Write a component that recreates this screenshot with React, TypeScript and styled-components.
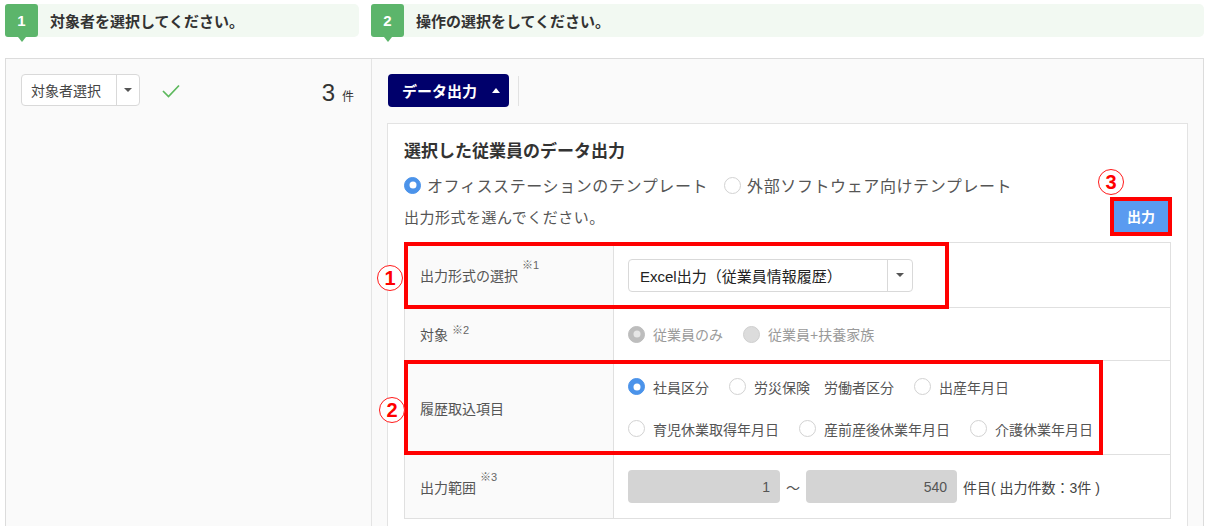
import styled, { createGlobalStyle } from "styled-components";

const GlobalStyle = createGlobalStyle`
  html, body {
    margin: 0;
    padding: 0;
    overflow: hidden;
    background: #ffffff;
  }
  body {
    font-family: "Liberation Sans", "Noto Sans CJK JP", sans-serif;
    color: #333333;
  }
  * {
    box-sizing: border-box;
  }
`;

const historyRows = [
  [
    { label: "社員区分", checked: true },
    { label: "労災保険　労働者区分" },
    { label: "出産年月日" },
  ],
  [
    { label: "育児休業取得年月日" },
    { label: "産前産後休業年月日" },
    { label: "介護休業年月日" },
  ],
];

export default function App() {
  return (
    <>
      <GlobalStyle />
      <Page>
        <StepRow>
          <Step $gap>
            <Badge>1</Badge>
            <StepText>対象者を選択してください。</StepText>
          </Step>
          <Step>
            <Badge>2</Badge>
            <StepText>操作の選択をしてください。</StepText>
          </Step>
        </StepRow>

        <Panel>
          <LeftCol>
            <SelectBox $width={119}>
              <SelectText $width={97}>対象者選択</SelectText>
              <SelectCaret $width={22}>
                <CaretDown />
              </SelectCaret>
            </SelectBox>
            <CheckIcon width="18" height="14" viewBox="0 0 18 14">
              <polyline
                points="1,7 6.5,12.5 17,1.5"
                fill="none"
                stroke="#5cb85c"
                strokeWidth="1.7"
              />
            </CheckIcon>
            <Count>
              3<small>件</small>
            </Count>
          </LeftCol>

          <RightCol>
            <Toolbar>
              <NavyButton>
                データ出力
                <CaretUp />
              </NavyButton>
              <ToolSep />
            </Toolbar>

            <Card>
              <CardTitle>選択した従業員のデータ出力</CardTitle>
              <TemplateRow>
                <RadioItem $gap={6} $size={16} $spacing={0.6}>
                  <RadioDot $on />
                  オフィスステーションのテンプレート
                </RadioItem>
                <RadioItem $gap={6} $size={16} $spacing={0.6}>
                  <RadioDot />
                  外部ソフトウェア向けテンプレート
                </RadioItem>
              </TemplateRow>

              <DescRow>
                <Desc>出力形式を選んでください。</Desc>
                <OutputWrap>
                  <Marker $left={-16} $top={-32}>3</Marker>
                  <OutputButton>出力</OutputButton>
                </OutputWrap>
              </DescRow>

              <FormTable>
                <Row $height={64}>
                  <Highlight $width={545} $height={67}>
                    <Marker $left={-31} $top={19}>1</Marker>
                  </Highlight>
                  <LabelCell>
                    出力形式の選択<Note>※1</Note>
                  </LabelCell>
                  <ValueCell>
                    <SelectBox $width={285} $height={33}>
                      <SelectText $width={260} $size={15} $color="#222">
                        Excel出力（従業員情報履歴）
                      </SelectText>
                      <SelectCaret $width={24}>
                        <CaretDown />
                      </SelectCaret>
                    </SelectBox>
                  </ValueCell>
                </Row>

                <Row $height={52}>
                  <LabelCell>
                    対象<Note>※2</Note>
                  </LabelCell>
                  <ValueCell>
                    <RadioItem $gap={8} $size={14} $muted>
                      <RadioDot $on $off />
                      従業員のみ
                    </RadioItem>
                    <RadioItem $gap={8} $size={14} $muted>
                      <RadioDot $off />
                      従業員+扶養家族
                    </RadioItem>
                  </ValueCell>
                </Row>

                <Row $height={93}>
                  <Highlight $width={699} $height={95}>
                    <Marker $left={-29} $top={33}>2</Marker>
                  </Highlight>
                  <LabelCell>履歴取込項目</LabelCell>
                  <ValueCell>
                    <RadioLines>
                      {historyRows.map((line, i) => (
                        <RadioLine key={i}>
                          {line.map((item) => (
                            <RadioItem key={item.label} $gap={8} $size={14}>
                              <RadioDot $on={item.checked} />
                              {item.label}
                            </RadioItem>
                          ))}
                        </RadioLine>
                      ))}
                    </RadioLines>
                  </ValueCell>
                </Row>

                <Row $height={63} $last>
                  <LabelCell>
                    出力範囲<Note>※3</Note>
                  </LabelCell>
                  <ValueCell>
                    <RangeInput $width={152}>1</RangeInput>
                    <Tilde>〜</Tilde>
                    <RangeInput $width={151}>540</RangeInput>
                    <RangeNote>件目( 出力件数：3件 )</RangeNote>
                  </ValueCell>
                </Row>
              </FormTable>
            </Card>
          </RightCol>
        </Panel>
      </Page>
    </>
  );
}

const Page = styled.div`
  min-height: 100vh;
  padding: 4px 6px 0 5px;
  display: flex;
  flex-direction: column;
`;

const StepRow = styled.div`
  display: grid;
  grid-template-columns: 366px 1fr;
`;

const Step = styled.div<{ $gap?: boolean }>`
  display: flex;
  align-items: center;
  height: 33px;
  margin-right: ${(p) => (p.$gap ? "12px" : "0")};
  background: #f2f9f2;
  border-radius: 3px 5px 5px 3px;
`;

const Badge = styled.div`
  position: relative;
  width: 33px;
  height: 33px;
  flex: none;
  display: flex;
  align-items: center;
  justify-content: center;
  background: #5cb56b;
  border-radius: 3px;
  color: #ffffff;
  font-weight: 700;
  font-size: 15px;

  &::after {
    content: "";
    position: absolute;
    left: 50%;
    bottom: -5px;
    transform: translateX(-50%);
    border-left: 4px solid transparent;
    border-right: 4px solid transparent;
    border-top: 5px solid #5cb56b;
  }
`;

const StepText = styled.span`
  margin-left: 12px;
  font-size: 15px;
  font-weight: 700;
  color: #333333;
`;

const Panel = styled.div`
  flex: 1;
  margin-top: 21px;
  display: grid;
  grid-template-columns: 366px 1fr;
  border: 1px solid #dcdcdc;
  border-bottom: none;
`;

const LeftCol = styled.div`
  display: flex;
  align-items: flex-start;
  padding: 15px 17px 0 15px;
  background: #fafafa;
  border-right: 1px solid #e4e4e4;
`;

const SelectBox = styled.div<{ $width: number; $height?: number }>`
  display: flex;
  width: ${(p) => p.$width}px;
  height: ${(p) => p.$height ?? 32}px;
  flex: none;
  background: #ffffff;
  border: 1px solid #d9d9d9;
  border-radius: 4px;
`;

const SelectText = styled.div<{ $width: number; $size?: number; $color?: string }>`
  width: ${(p) => p.$width}px;
  display: flex;
  align-items: center;
  padding-left: ${(p) => (p.$size ? 11 : 9)}px;
  border-right: 1px solid #d9d9d9;
  font-size: ${(p) => p.$size ?? 14}px;
  color: ${(p) => p.$color ?? "#444"};
  white-space: nowrap;
`;

const SelectCaret = styled.div<{ $width: number }>`
  width: ${(p) => p.$width}px;
  display: flex;
  align-items: center;
  justify-content: center;
`;

const CaretDown = styled.span`
  border-left: 4px solid transparent;
  border-right: 4px solid transparent;
  border-top: 4px solid #555555;
`;

const CaretUp = styled.span`
  margin-left: 15px;
  border-left: 4px solid transparent;
  border-right: 4px solid transparent;
  border-bottom: 5px solid #ffffff;
`;

const CheckIcon = styled.svg`
  margin: 10px 0 0 22px;
  flex: none;
`;

const Count = styled.div`
  margin-left: auto;
  margin-top: 3px;
  font-size: 24px;
  line-height: 32px;
  color: #333333;

  small {
    margin-left: 7px;
    font-size: 12px;
  }
`;

const RightCol = styled.div`
  padding: 15px 15px 0 15px;
  background: #fafafa;
`;

const Toolbar = styled.div`
  display: flex;
  align-items: center;
  height: 33px;
`;

const NavyButton = styled.button`
  display: flex;
  align-items: center;
  height: 33px;
  width: 121px;
  padding: 0 0 0 14px;
  margin-left: 1px;
  border: none;
  border-radius: 4px;
  background: #00006b;
  color: #ffffff;
  font-family: inherit;
  font-size: 15px;
  font-weight: 700;
`;

const ToolSep = styled.span`
  width: 1px;
  height: 30px;
  margin-left: 9px;
  background: #e2e2e2;
`;

const Card = styled.div`
  margin-top: 16px;
  padding: 15px 16px 16px 16px;
  background: #ffffff;
  border: 1px solid #e3e3e3;
`;

const CardTitle = styled.h2`
  margin: 0;
  font-size: 17px;
  line-height: 26px;
  font-weight: 700;
  color: #333333;
`;

const TemplateRow = styled.div`
  display: flex;
  align-items: center;
  gap: 16px;
  height: 28px;
  margin-top: 6px;
`;

const RadioItem = styled.label<{
  $gap: number;
  $size: number;
  $muted?: boolean;
  $spacing?: number;
}>`
  display: flex;
  align-items: center;
  gap: ${(p) => p.$gap}px;
  font-size: ${(p) => p.$size}px;
  letter-spacing: ${(p) => p.$spacing ?? 0}px;
  color: ${(p) => (p.$muted ? "#9a9a9a" : "#555555")};
  white-space: nowrap;
`;

const RadioDot = styled.span<{ $on?: boolean; $off?: boolean }>`
  position: relative;
  width: 17px;
  height: 17px;
  flex: none;
  border-radius: 50%;
  background: ${(p) => (p.$off ? (p.$on ? "#bdbdbd" : "#dcdcdc") : p.$on ? "#4b93ea" : "#ffffff")};
  border: 1px solid
    ${(p) => (p.$off ? (p.$on ? "#bdbdbd" : "#cfcfcf") : p.$on ? "#4b93ea" : "#d2d2d2")};

  &::after {
    content: "";
    display: ${(p) => (p.$on ? "block" : "none")};
    position: absolute;
    left: 50%;
    top: 50%;
    width: 7px;
    height: 7px;
    transform: translate(-50%, -50%);
    border-radius: 50%;
    background: ${(p) => (p.$off ? "#e6e6e6" : "#ffffff")};
  }
`;

const DescRow = styled.div`
  display: flex;
  align-items: center;
  justify-content: space-between;
  height: 34px;
  margin-bottom: 9px;
`;

const Desc = styled.span`
  font-size: 15px;
  letter-spacing: 0.5px;
  color: #555555;
`;

const OutputWrap = styled.div`
  position: relative;
  margin-right: 3px;
`;

const OutputButton = styled.button`
  display: block;
  width: 54px;
  height: 31px;
  border: none;
  background: #5a9bf0;
  color: #ffffff;
  font-family: inherit;
  font-size: 14px;
  font-weight: 700;
  outline: 4px solid #ff0000;
`;

const Marker = styled.span<{ $left: number; $top: number }>`
  position: absolute;
  left: ${(p) => p.$left}px;
  top: ${(p) => p.$top}px;
  width: 26px;
  height: 26px;
  display: flex;
  align-items: center;
  justify-content: center;
  border: 1.5px solid #ff1a1a;
  border-radius: 50%;
  background: #ffffff;
  color: #ff0000;
  font-size: 20px;
  font-weight: 700;
  line-height: 1;
`;

const FormTable = styled.div`
  border: 1px solid #e0e0e0;
`;

const Row = styled.div<{ $height: number; $last?: boolean }>`
  position: relative;
  display: grid;
  grid-template-columns: 209px 1fr;
  min-height: ${(p) => p.$height + (p.$last ? 0 : 1)}px;
  border-bottom: ${(p) => (p.$last ? "none" : "1px solid #e0e0e0")};
`;

const Highlight = styled.div<{ $width: number; $height: number }>`
  position: absolute;
  left: -1px;
  top: -1px;
  width: ${(p) => p.$width}px;
  height: ${(p) => p.$height}px;
  border: 4px solid #ff0000;
  pointer-events: none;
  z-index: 2;
`;

const LabelCell = styled.div`
  display: flex;
  align-items: center;
  padding-left: 15px;
  background: #fafafa;
  border-right: 1px solid #e0e0e0;
  font-size: 14px;
  color: #555555;
`;

const Note = styled.sup`
  align-self: flex-start;
  margin: 17px 0 0 4px;
  font-size: 11px;
  line-height: 1;
  color: #666666;
`;

const ValueCell = styled.div`
  display: flex;
  align-items: center;
  gap: 20px;
  padding-left: 14px;
`;

const RadioLines = styled.div`
  display: flex;
  flex-direction: column;
  gap: 20px;
`;

const RadioLine = styled.div`
  display: flex;
  align-items: center;
  gap: 20px;
  height: 22px;
`;

const RangeInput = styled.div<{ $width: number }>`
  width: ${(p) => p.$width}px;
  height: 33px;
  display: flex;
  align-items: center;
  justify-content: flex-end;
  padding-right: 10px;
  background: #d4d4d4;
  border-radius: 4px;
  font-size: 14px;
  color: #555555;
`;

const Tilde = styled.span`
  margin: 0 -14px;
  font-size: 14px;
  color: #555555;
`;

const RangeNote = styled.span`
  margin-left: -14px;
  font-size: 14px;
  color: #444444;
`;
